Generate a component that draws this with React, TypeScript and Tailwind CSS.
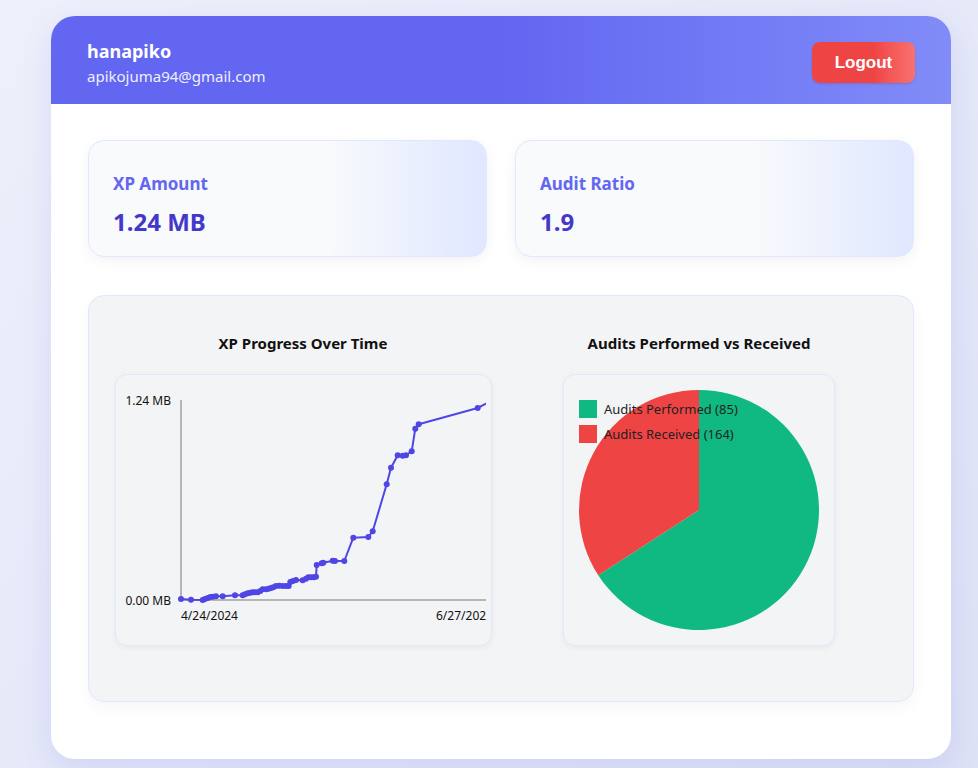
import React from "react";

const pts: [number, number][] = [
  [180, 599], [190, 599.7], [201.7, 600], [204, 599], [206.7, 598], [209.3, 597], [212, 596.7], [215, 596.3],
  [221.7, 596.3], [234, 595.3], [241.7, 595.3], [244, 594.3], [246.7, 593.3], [249.3, 592.7], [251.7, 592.3],
  [254, 592.3], [256.7, 592.3], [259.3, 591], [261.7, 589.3], [265, 589.3], [267.7, 588.7], [270, 588],
  [272.3, 587.3], [275, 586], [278.3, 585.7], [281.7, 586], [285, 586], [287.7, 586], [289.3, 582], [292, 581],
  [295, 580], [301.7, 580.3], [305, 578.7], [307.3, 577.3], [310, 577.3], [312.7, 577.3], [315, 576.7],
  [315.7, 565], [320.7, 563.3], [322.3, 562.7], [331.7, 560.7], [334, 561], [343.3, 561], [352.3, 537.7],
  [367.3, 537], [371.7, 531.3], [385.7, 484.3], [390, 467.7], [396.7, 455.3], [401.7, 455.7], [405, 455.3],
  [410.7, 451.3], [414.3, 428.7], [417.7, 424.3], [476.7, 408], [492, 400],
];

function LineChart() {
  const d = pts.map((p, i) => `${i ? "L" : "M"}${p[0]} ${p[1]}`).join(" ");
  return (
    <svg width="370" height="270" viewBox="115 375 370 270" className="block">
      <line x1="180" y1="400" x2="180" y2="600" stroke="#b5b5b5" strokeWidth="2" />
      <line x1="180" y1="600" x2="490" y2="600" stroke="#b5b5b5" strokeWidth="2" />
      <text x="170" y="404.5" textAnchor="end" fontSize="12" fill="#111" fontFamily="'Noto Sans', sans-serif">1.24 MB</text>
      <text x="170" y="604.5" textAnchor="end" fontSize="12" fill="#111" fontFamily="'Noto Sans', sans-serif">0.00 MB</text>
      <text x="180" y="620" fontSize="12" fill="#111" fontFamily="'Noto Sans', sans-serif">4/24/2024</text>
      <text x="435" y="620" fontSize="12" fill="#111" fontFamily="'Noto Sans', sans-serif">6/27/2025</text>
      <path d={d} fill="none" stroke="#4f46e5" strokeWidth="2" strokeLinejoin="round" />
      {pts.map((p, i) => (
        <circle key={i} cx={p[0]} cy={p[1]} r="3" fill="#4f46e5" />
      ))}
    </svg>
  );
}

function PieChart() {
  const cx = 135, cy = 135, r = 120;
  const a = (164 / 249) * Math.PI * 2;
  const ex = cx + r * Math.sin(a);
  const ey = cy - r * Math.cos(a);
  return (
    <svg width="270" height="270" viewBox="0 0 270 270" className="block">
      <path d={`M${cx} ${cy} L${cx} ${cy - r} A${r} ${r} 0 1 1 ${ex} ${ey} Z`} fill="#10b981" />
      <path d={`M${cx} ${cy} L${ex} ${ey} A${r} ${r} 0 0 1 ${cx} ${cy - r} Z`} fill="#ef4444" />
      <rect x="15" y="25" width="18" height="18" fill="#10b981" />
      <rect x="15" y="50" width="18" height="18" fill="#ef4444" />
      <text x="40" y="39" fontSize="13" fill="#222" fontFamily="'Noto Sans', sans-serif">Audits Performed (85)</text>
      <text x="40" y="64" fontSize="13" fill="#222" fontFamily="'Noto Sans', sans-serif">Audits Received (164)</text>
    </svg>
  );
}

export default function App() {
  return (
    <div className="min-h-screen bg-linear-to-br from-[#eef0fb] to-[#dde2f5] pt-4 pb-[10px]" style={{ fontFamily: "'Noto Sans', 'Open Sans', sans-serif" }}>
      <div className="ml-[51px] w-[900px] overflow-hidden rounded-[24px] bg-white shadow-[0_10px_30px_rgba(99,102,241,0.15)]">
        <header className="flex h-[88px] items-center justify-between bg-linear-to-r from-[#6366f1] from-50% to-[#818cf8] px-9">
          <div className="pt-[6px] text-white">
            <div className="text-[18px] font-bold leading-[24px]">hanapiko</div>
            <div className="mt-[2px] text-[15px] leading-[22px] text-[#eef0ff]">apikojuma94@gmail.com</div>
          </div>
          <button className="mt-[5px] h-[41px] w-[103px] rounded-lg bg-linear-to-r from-[#ef4444] from-60% to-[#f87171] text-[17px] font-bold text-white shadow-sm" style={{ fontFamily: "'Liberation Sans', Arial, sans-serif" }}>
            Logout
          </button>
        </header>
        <main className="px-[37px] pt-9 pb-[57px]">
          <div className="grid grid-cols-2 gap-7">
            <div className="h-[117px] rounded-2xl border border-[#e0e7ff] bg-linear-to-r from-[#f8fafc] from-60% to-[#e0e7ff] px-6 pt-[30px] shadow-[0_4px_14px_rgba(0,0,0,0.05)]">
              <div className="text-[17px] font-bold leading-[26px] text-[#6366f1]">XP Amount</div>
              <div className="mt-3 text-[24px] font-bold leading-[26px] text-[#4338ca]">1.24 MB</div>
            </div>
            <div className="h-[117px] rounded-2xl border border-[#e0e7ff] bg-linear-to-r from-[#f8fafc] from-60% to-[#e0e7ff] px-6 pt-[30px] shadow-[0_4px_14px_rgba(0,0,0,0.05)]">
              <div className="text-[17px] font-bold leading-[26px] text-[#6366f1]">Audit Ratio</div>
              <div className="mt-3 text-[24px] font-bold leading-[26px] text-[#4338ca]">1.9</div>
            </div>
          </div>
          <section className="mt-[38px] grid grid-cols-2 gap-4 rounded-2xl border border-[#e0e7ff] bg-[#f3f4f6] px-6 pt-[37px] pb-[55px] shadow-[0_6px_16px_rgba(0,0,0,0.04)]">
            <div className="flex flex-col items-center">
              <h2 className="text-[15px] font-bold leading-[20px] text-[#111]">XP Progress Over Time</h2>
              <div className="mt-[21px] h-[272px] w-[377px] overflow-hidden rounded-xl border border-[#e0e7ff] bg-[#f3f4f6] shadow-[0_2px_6px_rgba(0,0,0,0.05)]">
                <LineChart />
              </div>
            </div>
            <div className="flex flex-col items-center">
              <h2 className="text-[15px] font-bold leading-[20px] text-[#111]">Audits Performed vs Received</h2>
              <div className="mt-[21px] h-[272px] w-[272px] overflow-hidden rounded-xl border border-[#e0e7ff] bg-[#f3f4f6] shadow-[0_2px_6px_rgba(0,0,0,0.05)]">
                <PieChart />
              </div>
            </div>
          </section>
        </main>
      </div>
    </div>
  );
}
